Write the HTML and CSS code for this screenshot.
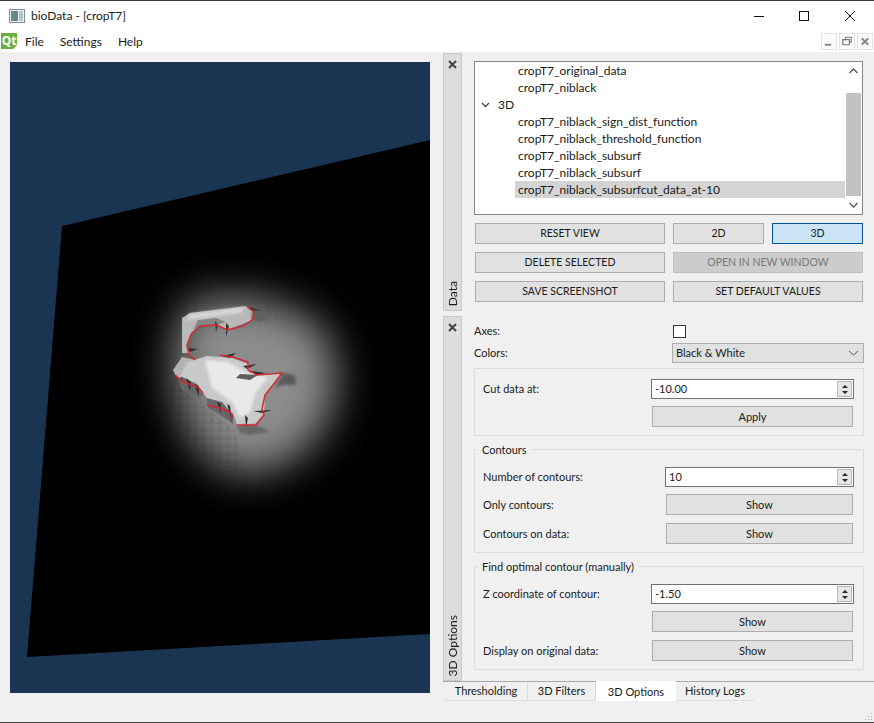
FILE: index.html
```html
<!DOCTYPE html>
<html lang="en">
<head>
<meta charset="utf-8">
<title>bioData - [cropT7]</title>
<link rel="stylesheet" href="styles.css">
</head>
<body>
<div class="window">
  <header class="titlebar">
    <svg class="app-icon" width="16" height="14" viewBox="0 0 16 14"><rect x="0.5" y="0.5" width="15" height="13" fill="#eef2f2" stroke="#7f8f90"/><rect x="2" y="2" width="7" height="10" fill="#5f8a8c"/><rect x="10" y="2" width="4" height="10" fill="#b9c6c8"/></svg>
    <span class="title">bioData - [cropT7]</span>
    <div class="winctl">
      <svg width="120" height="12" viewBox="0 0 120 12"><path d="M0 6.5H10" stroke="#111" fill="none"/><rect x="45.5" y="1.5" width="9" height="9" stroke="#111" fill="none"/><path d="M91 1L101 11M101 1L91 11" stroke="#111" fill="none"/></svg>
    </div>
  </header>
  <nav class="menubar">
    <svg class="qt" width="16" height="16" viewBox="0 0 16 16"><path d="M0 0H16V12L12 16H0Z" fill="#69b040"/><text x="8" y="12" text-anchor="middle" class="qt-text">Qt</text></svg>
    <span class="menu first">File</span><span class="menu">Settings</span><span class="menu">Help</span>
    <div class="mdi">
      <span class="mdi-btn"><svg width="15" height="15" viewBox="0 0 15 15"><path d="M3 11H10" stroke="#888" stroke-width="2"/></svg></span>
      <span class="mdi-btn"><svg width="15" height="15" viewBox="0 0 15 15"><path d="M6 5V3H12V8H10M3 5.5H10V11H3Z" stroke="#777" stroke-width="1.2" fill="none"/></svg></span>
      <span class="mdi-btn"><svg width="15" height="15" viewBox="0 0 15 15"><path d="M4 4L11 11M11 4L4 11" stroke="#888" stroke-width="2"/></svg></span>
    </div>
  </nav>
  <main class="content">
    <div class="view">
      <svg width="420" height="631" viewBox="10 62 420 631">
        <defs>
          <filter id="halo" x="-50%" y="-50%" width="200%" height="200%"><feGaussianBlur stdDeviation="21"/></filter>
          <filter id="soft" x="-20%" y="-20%" width="140%" height="140%"><feGaussianBlur stdDeviation="1.5"/></filter>
          <filter id="soft2" x="-10%" y="-10%" width="120%" height="120%"><feGaussianBlur stdDeviation="0.5"/></filter>
          <pattern id="facets" width="8" height="8" patternUnits="userSpaceOnUse"><path d="M0 8L4 0L8 8Z" fill="#000" opacity=".07"/></pattern>
        </defs>
        <rect x="10" y="62" width="420" height="631" fill="#1a3551"/>
        <polygon points="62,226 430,140 430,634 27,657" fill="#000"/>
        <path d="M194 300Q266 286 322 328Q352 380 320 434Q276 484 228 470Q182 447 174 380Q170 328 194 300Z" fill="#8c8c8c" filter="url(#halo)"/>
        <path d="M170 380L235 430L245 475L200 455L172 415Z" fill="url(#facets)"/>
        <path d="M190 300L270 295L290 320L240 330L190 330Z" fill="url(#facets)" opacity=".5"/>
        <polygon points="182,318 190,313 247,306 255,312 252,320 240,325 228,329 215,326 200,326 190,335 187,345 190,353 182,353" fill="#b8b8b8" filter="url(#soft2)"/>
        <polygon points="198,320 216,318 226,322 214,326 200,326 193,330" fill="#858585" filter="url(#soft2)"/>
        <polygon points="190,314 246,307 240,313 200,318 186,320" fill="#d8d8d8" filter="url(#soft)"/>
        <polygon points="173,370 182,357 195,360 180,378 176,376" fill="#b4b4b4" filter="url(#soft2)"/>
        <polygon points="188,362 207,356 232,358 248,364 250,373 258,375 282,373 265,396 264,413 264,414 254,425 237,425 233,413 207,398 197,384 180,376" fill="#c9c9c9" filter="url(#soft2)"/>
        <polygon points="205,360 228,362 246,372 268,377 256,392 250,412 240,418 232,402 212,388" fill="#e9e9e9" filter="url(#soft)"/>
        <polygon points="207,398 222,402 233,415 233,424 222,416 208,408" fill="#666" filter="url(#soft2)"/>
        <polygon points="237,426 256,425 270,432 250,435 240,433" fill="#666" filter="url(#soft)"/>
        <polygon points="283,373 295,375 296,385 282,385 275,388" fill="#5a5a5a" filter="url(#soft)"/>
        <polygon points="253,307 265,312 267,320 256,322 252,318" fill="#606060" filter="url(#soft)"/>
        <polygon points="178,378 196,388 203,395 200,398 182,390" fill="#666" filter="url(#soft2)"/>
        <polygon points="240,374 258,375 250,380 236,378" fill="#5d5d5d" filter="url(#soft2)"/>
        <path d="M246 306L262 311L250 310ZM215 321L216 332L218 325ZM226 323L226 337L229 326ZM188 348L198 349L190 352ZM222 356L236 353L230 358ZM243 366L257 364L247 369ZM252 371L266 373L256 375ZM253 411L272 410L262 413ZM245 415L246 428L248 418ZM186 378L190 392L191 382ZM194 384L199 396L199 386ZM217 402L221 414L221 404ZM227 404L232 422L230 406Z" fill="#333" filter="url(#soft2)"/>
        <g class="redline">
          <polyline points="247,306 254,312 252,320 245,325 236,328 227,330 217,325 200,326 192,333 187,345 189,355 195,360"/>
          <polyline points="220,355 233,357 248,362 248,370 257,375 282,373 273,385 265,395 262,409 264,415 256,425 237,425"/>
          <polyline points="175,375 183,382 198,387 203,393"/>
          <polyline points="207,405 220,408 230,412 233,418"/>
        </g>
      </svg>
    </div>
    <aside class="side">
      <div class="panels">
        <section class="dock dock-data">
          <div class="strip"><svg class="strip-x" width="9" height="9" viewBox="0 0 9 9"><path d="M1 1L8 8M8 1L1 8" stroke="#444" stroke-width="2"/></svg><span class="strip-label">Data</span></div>
          <div class="dock-body">
            <div class="tree">
              <ul class="tree-list">
                <li class="leaf">cropT7_original_data</li>
                <li class="leaf">cropT7_niblack</li>
                <li class="branch"><svg width="9" height="6" viewBox="0 0 9 6"><path d="M1 1L4.500 4.500L8 1" stroke="#444" stroke-width="1.300" fill="none"/></svg><span>3D</span></li>
                <li class="leaf">cropT7_niblack_sign_dist_function</li>
                <li class="leaf">cropT7_niblack_threshold_function</li>
                <li class="leaf">cropT7_niblack_subsurf</li>
                <li class="leaf">cropT7_niblack_subsurf</li>
                <li class="leaf selected">cropT7_niblack_subsurfcut_data_at-10</li>
              </ul>
              <div class="scrollbar">
                <svg class="sb-arrow" width="15" height="17" viewBox="0 0 15 17"><path d="M3.500 11L7.500 7L11.500 11" stroke="#555" stroke-width="1.300" fill="none"/></svg>
                <div class="sb-thumb"></div>
                <svg class="sb-arrow" width="15" height="17" viewBox="0 0 15 17"><path d="M3.500 6L7.500 10L11.500 6" stroke="#555" stroke-width="1.300" fill="none"/></svg>
              </div>
            </div>
            <div class="btn-grid">
              <button class="btn">RESET VIEW</button>
              <div class="btn-pair"><button class="btn">2D</button><button class="btn active">3D</button></div>
              <button class="btn">DELETE SELECTED</button>
              <button class="btn disabled">OPEN IN NEW WINDOW</button>
              <button class="btn">SAVE SCREENSHOT</button>
              <button class="btn">SET DEFAULT VALUES</button>
            </div>
          </div>
        </section>
        <section class="dock dock-options">
          <div class="strip"><svg class="strip-x" width="9" height="9" viewBox="0 0 9 9"><path d="M1 1L8 8M8 1L1 8" stroke="#444" stroke-width="2"/></svg><span class="strip-label">3D Options</span></div>
          <div class="dock-body options">
            <div class="opt-row axes"><span>Axes:</span><span class="check"></span></div>
            <div class="opt-row colors"><span>Colors:</span><div class="combo"><span>Black &amp; White</span><svg width="11" height="6" viewBox="0 0 11 6"><path d="M1 1L5.500 5L10 1" stroke="#555" fill="none"/></svg></div></div>
            <div class="group group-cut">
              <div class="g-row h20"><span>Cut data at:</span><div class="spin w203"><span>-10.00</span><span class="arrows"><i class="up"></i><i class="down"></i></span></div></div>
              <div class="g-row"><span></span><button class="btn w201">Apply</button></div>
            </div>
            <div class="group group-contours">
              <span class="legend">Contours</span>
              <div class="g-row h20"><span>Number of contours:</span><div class="spin w189"><span>10</span><span class="arrows"><i class="up"></i><i class="down"></i></span></div></div>
              <div class="g-row"><span>Only contours:</span><button class="btn w187">Show</button></div>
              <div class="g-row"><span>Contours on data:</span><button class="btn w187">Show</button></div>
            </div>
            <div class="group group-optimal">
              <span class="legend">Find optimal contour (manually)</span>
              <div class="g-row h20"><span>Z coordinate of contour:</span><div class="spin w203"><span>-1.50</span><span class="arrows"><i class="up"></i><i class="down"></i></span></div></div>
              <div class="g-row"><span></span><button class="btn w201">Show</button></div>
              <div class="g-row"><span>Display on original data:</span><button class="btn w201">Show</button></div>
            </div>
          </div>
        </section>
      </div>
      <div class="tabs">
        <span class="tab t1">Thresholding</span><span class="tab t2">3D Filters</span><span class="tab t3 current">3D Options</span><span class="tab t4">History Logs</span>
      </div>
    </aside>
  </main>
  <footer class="status">
    <svg width="9" height="9" viewBox="0 0 9 9"><path d="M7 1h1v1H7zM4 4h1v1H4zM7 4h1v1H7zM1 7h1v1H1zM4 7h1v1H4zM7 7h1v1H7z" fill="#aaa"/></svg>
  </footer>
</div>
</body>
</html>
```

FILE: styles.css
```css
* { box-sizing: border-box; }
html, body { margin: 0; padding: 0; }
body { background: #f0f0f0; font: 12px/16px Lato, "Noto Sans", sans-serif; color: #1a1a1a; overflow: hidden; }
.window { width: 874px; height: 723px; display: flex; flex-direction: column; border-top: 1px solid #3a3a3a; border-bottom: 1px solid #444; overflow: hidden; }

.titlebar { height: 29px; flex: none; background: #fff; display: flex; align-items: center; padding: 0 0 0 9px; }
.app-icon { margin-right: 6px; }
.title { color: #222; font-size: 12px; }
.winctl { margin-left: auto; display: flex; align-items: center; }

.menubar { height: 22px; flex: none; background: #fff; display: flex; align-items: center; padding: 0 1px 0 1px; }
.qt { margin-right: 8px; }
.qt-text { font: bold 12px "Noto Sans", sans-serif; fill: #fff; }
.menu { margin-right: 16px; padding-top: 2px; }
.mdi { margin-left: auto; display: flex; gap: 2px; }
.mdi-btn { width: 16px; height: 17px; border: 1px solid #e2e2e2; display: flex; align-items: center; justify-content: center; background: #fbfbfb; }

.content { flex: 1; min-height: 0; display: flex; background: #f0f0f0; }
.view { width: 420px; height: 631px; margin: 10px 13px 0 10px; flex: none; }
.view svg { display: block; }
.redline polyline { fill: none; stroke: #d02a30; stroke-width: 1.500; stroke-linejoin: round; }

.side { flex: 1; min-width: 0; display: flex; flex-direction: column; padding-top: 1px; }
.panels { height: 629px; flex: none; display: flex; flex-direction: column; gap: 5px; border-bottom: 1px solid #a8a8a8; }
.dock { display: flex; }
.dock-data { height: 258px; }
.dock-options { height: 365px; }
.strip { width: 19px; flex: none; background: #dcdcdc; border: 1px solid #c9c9c9; display: flex; flex-direction: column; align-items: center; justify-content: space-between; padding: 6px 0 4px; }
.strip-x { display: block; }
.strip-label { writing-mode: vertical-rl; transform: rotate(180deg); line-height: 16px; }
.dock-body { flex: 1; min-width: 0; padding: 8px 11px 0 12px; }

.tree { height: 154px; width: 389px; background: #fff; border: 1px solid #828790; display: flex; }
.tree-list { list-style: none; margin: 0; padding: 0; flex: 1; min-width: 0; }
.tree-list li { height: 17px; line-height: 17px; white-space: nowrap; }
.leaf { margin-left: 40px; padding-left: 3px; }
.leaf.selected { background: #d4d4d4; }
.branch { padding-left: 6px; display: flex; align-items: center; gap: 8px; }
.scrollbar { width: 15px; flex: none; margin-left: 1px; display: flex; flex-direction: column; margin-right: 1px; }
.sb-arrow { display: block; flex: none; }
.sb-thumb { height: 104px; background: #c2c2c2; margin-top: 14px; margin-bottom: 1px; }

.btn { font: inherit; color: #1a1a1a; background: #e1e1e1; border: 1px solid #adadad; padding: 0 0 1px; height: 21px; line-height: 17px; display: block; }
.btn.active { background: #cce4f7; border-color: #005499; }
.btn.disabled { background: #cccccc; border-color: #bfbfbf; color: #787878; }
.btn-grid { display: grid; grid-template-columns: 190px 190px; gap: 8px; margin: 8px 0 0 1px; font-size: 10.5px; }
.btn-pair { display: grid; grid-template-columns: 91px 91px; column-gap: 8px; }

.options { padding-top: 8px; font-size: 11px; }
.opt-row { display: flex; justify-content: space-between; align-items: center; width: 390px; }
.axes { height: 14px; padding-right: 178px; }
.check { width: 13px; height: 13px; border: 1px solid #333; background: #fff; display: block; }
.colors { height: 20px; margin-top: 5px; }
.combo { width: 192px; height: 20px; background: #e1e1e1; border: 1px solid #adadad; display: flex; align-items: center; justify-content: space-between; padding: 0 4px 0 3px; }

.group { width: 390px; border: 1px solid #dcdcdc; padding: 0 10px 0 8px; position: relative; }
.group-cut { height: 68px; margin-top: 5px; padding-top: 10px; }
.group-contours { height: 104px; margin-top: 13px; padding-top: 17px; }
.group-optimal { height: 104px; margin-top: 13px; padding-top: 17px; }
.legend { position: absolute; left: 3px; top: -8px; background: #f0f0f0; padding: 0 4px; }
.g-row { display: flex; justify-content: space-between; align-items: center; height: 21px; margin-top: 8px; }
.g-row.h20 { height: 20px; margin-top: 0; }
.g-row.h20 + .g-row { margin-top: 7px; }
.spin { height: 20px; background: #fff; border: 1px solid #707070; display: flex; align-items: center; justify-content: space-between; padding: 0 1px 0 3px; margin-right: -1px; }
.w203 { width: 203px; }
.w189 { width: 189px; }
.w201 { width: 201px; }
.w187 { width: 187px; }
.arrows { width: 15px; height: 16px; border: 1px solid #b8b8b8; background: #e6e6e6; display: flex; flex-direction: column; align-items: center; justify-content: center; gap: 3px; }
.up { width: 0; height: 0; border: 3px solid transparent; border-top: 0; border-bottom: 3px solid #222; display: block; }
.down { width: 0; height: 0; border: 3px solid transparent; border-bottom: 0; border-top: 3px solid #222; display: block; }

.tabs { display: flex; height: 20px; padding-left: 2px; font-size: 11px; }
.tab { height: 19px; line-height: 18px; text-align: center; border-right: 1px solid #dcdcdc; border-bottom: 1px solid #dcdcdc; }
.t1 { width: 83px; }
.t2 { width: 68px; }
.t3 { width: 80px; }
.t4 { width: 78px; border-right: 0; }
.tab.current { background: #fff; height: 20px; margin-top: -1px; line-height: 21px; border: 0; }

.status { height: 19px; flex: none; background: #f0f0f0; display: flex; justify-content: flex-end; align-items: flex-end; padding: 0 1px 1px 0; }
.status svg { display: block; }
```
